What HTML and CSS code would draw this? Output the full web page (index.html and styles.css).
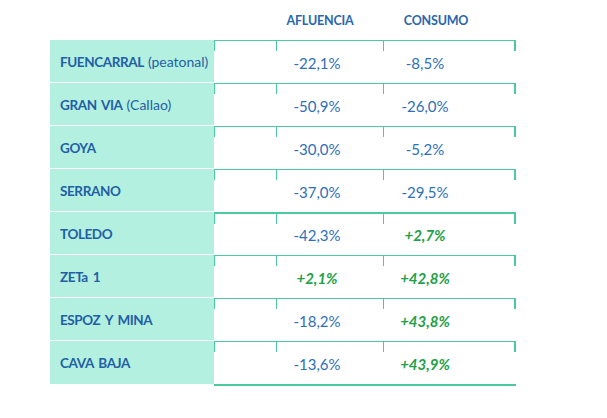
FILE: index.html
```html
<!DOCTYPE html>
<html>
<head>
<meta charset="utf-8">
<link rel="stylesheet" href="styles.css">
</head>
<body>
<div class="table">
  <div class="head">
    <div class="hlabel"></div>
    <div class="hdata">
      <span class="h h-af">AFLUENCIA</span>
      <span class="h h-co">CONSUMO</span>
    </div>
  </div>
  <div class="row">
    <div class="label"><b>FUENCARRAL</b> (peatonal)</div>
    <div class="data"><span></span><span class="v">-22,1%</span><span class="v">-8,5%</span></div>
  </div>
  <div class="row">
    <div class="label"><b>GRAN VIA</b> (Callao)</div>
    <div class="data"><span></span><span class="v">-50,9%</span><span class="v">-26,0%</span></div>
  </div>
  <div class="row">
    <div class="label"><b>GOYA</b></div>
    <div class="data"><span></span><span class="v">-30,0%</span><span class="v">-5,2%</span></div>
  </div>
  <div class="row">
    <div class="label"><b>SERRANO</b></div>
    <div class="data"><span></span><span class="v">-37,0%</span><span class="v">-29,5%</span></div>
  </div>
  <div class="row thick">
    <div class="label"><b>TOLEDO</b></div>
    <div class="data"><span></span><span class="v">-42,3%</span><span class="v pos">+2,7%</span></div>
  </div>
  <div class="row">
    <div class="label"><b>ZETa 1</b></div>
    <div class="data"><span></span><span class="v pos">+2,1%</span><span class="v pos">+42,8%</span></div>
  </div>
  <div class="row">
    <div class="label"><b>ESPOZ Y MINA</b></div>
    <div class="data"><span></span><span class="v">-18,2%</span><span class="v pos">+43,8%</span></div>
  </div>
  <div class="row last">
    <div class="label"><b>CAVA BAJA</b></div>
    <div class="data"><span></span><span class="v">-13,6%</span><span class="v pos">+43,9%</span></div>
  </div>
</div>
</body>
</html>
```

FILE: styles.css
```css
* { box-sizing: border-box; }
html, body { margin: 0; padding: 0; background: #fff; }
body {
  width: 607px;
  height: 418px;
  font-family: Lato, "Liberation Sans", sans-serif;
  padding: 0 0 0 50px;
}
.table { display: flex; flex-direction: column; width: 466px; }
.head { display: flex; height: 40px; }
.hlabel { width: 164px; }
.hdata {
  flex: 1;
  display: grid;
  align-items: center;
  padding-left: 52px;
  grid-template-columns: 108px 114px;
  padding-top: 1px;
}
.h {
  text-align: center;
  font-weight: bold;
  font-size: 12.5px;
  color: #2a66ae;
  letter-spacing: -0.2px;
}
.h-co { padding-left: 10px; }
.row { display: flex; height: 43px; }
.label {
  width: 164px;
  background: #b4f0df;
  border-bottom: 1px solid #fff;
  display: flex;
  align-items: center;
  padding: 1px 0 0 10px;
  font-size: 14px;
  color: #1f5fa5;
}
.label b {
  font-weight: bold;
  font-size: 13.5px;
  margin-right: 4px;
  letter-spacing: -0.4px;
  word-spacing: 2px;
}
.row.last .label { border-bottom: none; }
.data {
  width: 302px;
  display: grid;
  grid-template-columns: 52px 102px 114px;
  align-items: center;
  border-top: 1px solid #4cc9a0;
  background:
    linear-gradient(#4cc9a0, #4cc9a0) 0 0 / 1px 10px no-repeat,
    linear-gradient(#4cc9a0, #4cc9a0) 62px 0 / 1px 10px no-repeat,
    linear-gradient(#4cc9a0, #4cc9a0) 169px 0 / 1px 10px no-repeat,
    linear-gradient(#4cc9a0, #4cc9a0) 300px 0 / 2px 10px no-repeat;
}
.row.thick .data { border-top-width: 2px; }
.row.last .data { border-bottom: 2px solid #4cc9a0; height: 45px; }
.v {
  text-align: center;
  font-size: 15px;
  color: #2e6fb8;
  padding-top: 1px;
}
.v.pos { color: #22a046; font-weight: bold; font-style: italic; }
```
